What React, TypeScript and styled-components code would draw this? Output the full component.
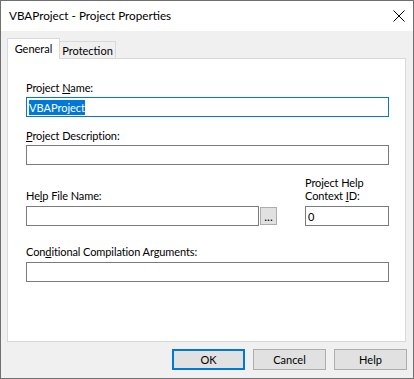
import styled, { createGlobalStyle } from 'styled-components';

const GlobalStyle = createGlobalStyle`
  html, body {
    margin: 0;
    padding: 0;
    background: #ffffff;
  }
  body {
    font-family: Lato, 'Noto Sans', sans-serif;
    font-size: 11px;
    color: #000000;
  }
`;

const Window = styled.div`
  width: 414px;
  height: 379px;
  box-sizing: border-box;
  border: 1px solid #707070;
  display: flex;
  flex-direction: column;
  background: #f0f0f0;
`;

const TitleBar = styled.div`
  height: 30px;
  background: #ffffff;
  display: flex;
  align-items: center;
  justify-content: space-between;
  padding: 0 7px 0 8px;
  flex-shrink: 0;
`;

const Title = styled.span`
  font-size: 11.7px;
  line-height: 16px;
  padding-bottom: 2px;
`;

const CloseBox = styled.div`
  width: 14px;
  height: 14px;
  display: flex;
  align-items: center;
  justify-content: center;
  margin-bottom: 1px;
`;

const Body = styled.div`
  flex: 1;
  display: flex;
  flex-direction: column;
  padding: 7px 7px 8px 6px;
`;

const TabRow = styled.div`
  height: 20px;
  display: flex;
  align-items: flex-end;
`;

const Tab = styled.div<{ active?: boolean }>`
  position: relative;
  z-index: ${p => (p.active ? 1 : 0)};
  box-sizing: border-box;
  height: ${p => (p.active ? 21 : 17)}px;
  width: ${p => (p.active ? 53 : 57)}px;
  margin-left: ${p => (p.active ? 0 : -1)}px;
  margin-bottom: ${p => (p.active ? -1 : 0)}px;
  border: 1px solid #d9d9d9;
  border-bottom: none;
  background: ${p => (p.active ? '#ffffff' : '#f0f0f0')};
  display: flex;
  align-items: center;
  justify-content: center;
  padding-bottom: ${p => (p.active ? 2 : 0)}px;
  line-height: 15px;
`;

const Panel = styled.div`
  box-sizing: border-box;
  height: 284px;
  border: 1px solid #d9d9d9;
  background: #ffffff;
  padding: 21px 16px 0 18px;
  display: flex;
  flex-direction: column;
`;

const Field = styled.div<{ gap?: number }>`
  display: flex;
  flex-direction: column;
  margin-top: ${p => p.gap ?? 0}px;
`;

const Label = styled.label<{ lh?: number; mb?: number }>`
  display: block;
  line-height: ${p => p.lh ?? 16}px;
  margin-bottom: ${p => p.mb ?? 1}px;
  white-space: nowrap;
  letter-spacing: -0.1px;
`;

const TextBox = styled.div<{ focused?: boolean }>`
  box-sizing: border-box;
  height: 20px;
  border: 1px solid ${p => (p.focused ? '#0078d7' : '#7a7a7a')};
  background: #ffffff;
  display: flex;
  align-items: center;
  padding: 0 2px;
  min-width: 0;
  line-height: 15px;
`;

const Selected = styled.span`
  background: #0078d7;
  color: #ffffff;
  line-height: 15px;
`;

const HelpRow = styled.div`
  display: grid;
  grid-template-columns: 251px 84px;
  justify-content: space-between;
  align-items: end;
  margin-top: 11px;
`;

const InputWithButton = styled.div`
  display: flex;
  align-items: center;
  gap: 1px;

  & > ${TextBox} {
    flex: 1;
  }
`;

const BrowseButton = styled.div`
  box-sizing: border-box;
  width: 17px;
  height: 18px;
  border: 1px solid #adadad;
  background: #e1e1e1;
  display: flex;
  align-items: flex-end;
  justify-content: center;
  font-size: 12px;
  line-height: 14px;
`;

const ButtonRow = styled.div`
  display: flex;
  justify-content: flex-end;
  gap: 8px;
  margin-top: 7px;
  margin-right: -1px;
`;

const Button = styled.div<{ isDefault?: boolean }>`
  box-sizing: border-box;
  width: 73px;
  height: 21px;
  background: #e1e1e1;
  border: ${p => (p.isDefault ? '2px solid #0078d7' : '1px solid #adadad')};
  display: flex;
  align-items: center;
  justify-content: center;
  line-height: 15px;
`;

export default function App() {
  return (
    <>
      <GlobalStyle />
      <Window>
        <TitleBar>
          <Title>VBAProject - Project Properties</Title>
          <CloseBox>
            <svg width='12' height='12' viewBox='0 0 12 12'>
              <path d='M0.5 0.5 L11.5 11.5 M11.5 0.5 L0.5 11.5' stroke='#000' strokeWidth='1' fill='none' />
            </svg>
          </CloseBox>
        </TitleBar>
        <Body>
          <TabRow>
            <Tab active>General</Tab>
            <Tab>Protection</Tab>
          </TabRow>
          <Panel>
            <Field>
              <Label>
                Project <u>N</u>ame:
              </Label>
              <TextBox focused>
                <Selected>VBAProject</Selected>
              </TextBox>
            </Field>
            <Field gap={11}>
              <Label>
                <u>P</u>roject Description:
              </Label>
              <TextBox />
            </Field>
            <HelpRow>
              <Field>
                <Label mb={2}>
                  He<u>l</u>p File Name:
                </Label>
                <InputWithButton>
                  <TextBox />
                  <BrowseButton>...</BrowseButton>
                </InputWithButton>
              </Field>
              <Field>
                <Label lh={13} mb={4}>
                  Project Help
                  <br />
                  Context <u>I</u>D:
                </Label>
                <TextBox>0</TextBox>
              </Field>
            </HelpRow>
            <Field gap={18}>
              <Label mb={2}>
                Con<u>d</u>itional Compilation Arguments:
              </Label>
              <TextBox />
            </Field>
          </Panel>
          <ButtonRow>
            <Button isDefault>OK</Button>
            <Button>Cancel</Button>
            <Button>Help</Button>
          </ButtonRow>
        </Body>
      </Window>
    </>
  );
}
